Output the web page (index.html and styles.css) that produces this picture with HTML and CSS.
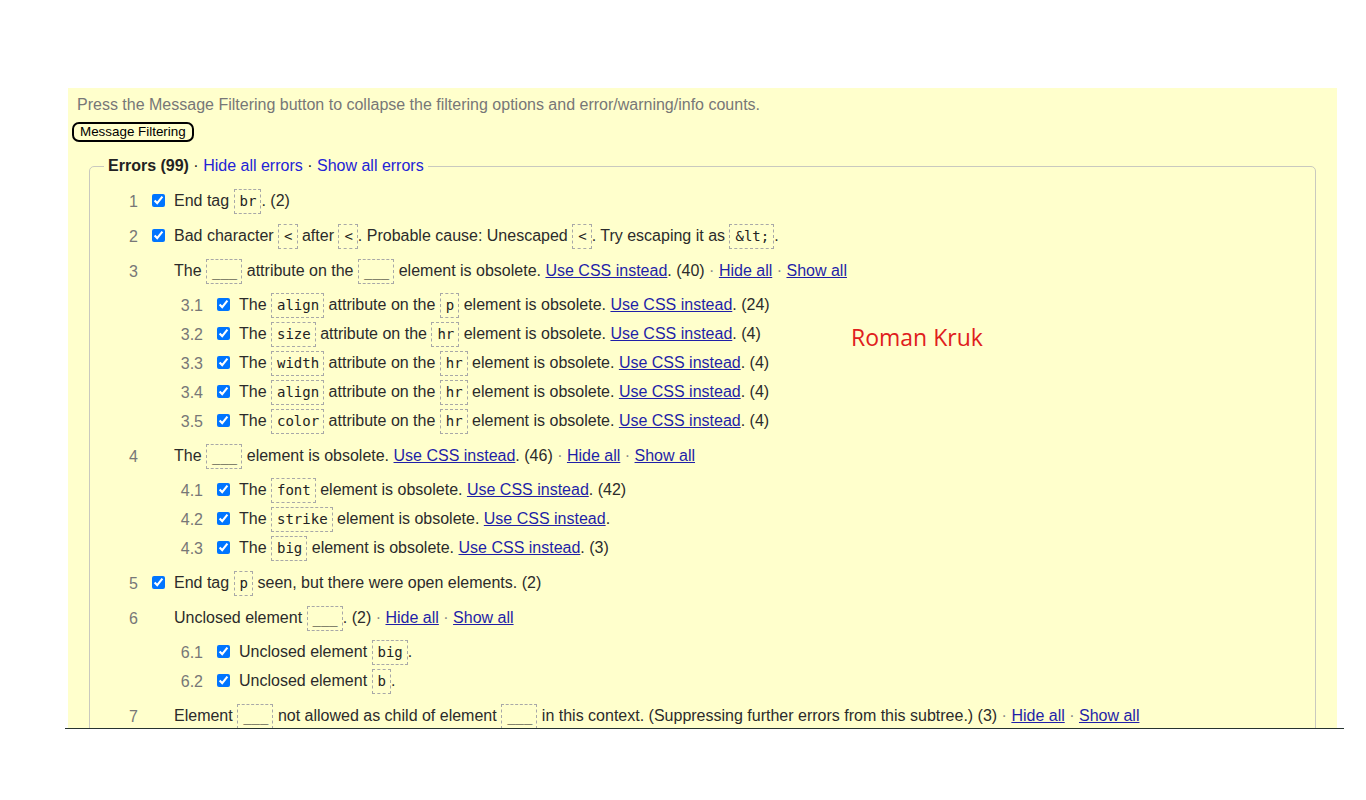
FILE: index.html
```html
<!DOCTYPE html>
<html lang="en">
<head>
<meta charset="utf-8">
<title>Message Filtering</title>
<link rel="stylesheet" href="styles.css">
</head>
<body>
<div class="page">
  <div class="panel">
    <p class="hint">Press the Message Filtering button to collapse the filtering options and error/warning/info counts.</p>
    <button class="filter-btn" type="button">Message Filtering</button>
    <fieldset class="errors">
      <legend class="legend"><b>Errors (99)</b> · <a class="lg-link" href="#">Hide all errors</a> · <a class="lg-link" href="#">Show all errors</a></legend>
      <ol class="list">
        <li class="item">
          <div class="row"><span class="num">1</span><span class="cb"><input type="checkbox" checked></span><span class="msg">End tag <code>br</code>. (2)</span></div>
        </li>
        <li class="item">
          <div class="row"><span class="num">2</span><span class="cb"><input type="checkbox" checked></span><span class="msg">Bad character <code>&lt;</code> after <code>&lt;</code>. Probable cause: Unescaped <code>&lt;</code>. Try escaping it as <code>&amp;lt;</code>.</span></div>
        </li>
        <li class="item">
          <div class="row"><span class="num">3</span><span class="cb"></span><span class="msg">The <code>___</code> attribute on the <code>___</code> element is obsolete. <a href="#">Use CSS instead</a>. (40) <span class="sep">·</span> <a href="#">Hide all</a> <span class="sep">·</span> <a href="#">Show all</a></span></div>
          <ol class="sub">
            <li class="row subrow"><span class="num">3.1</span><span class="cb"><input type="checkbox" checked></span><span class="msg">The <code>align</code> attribute on the <code>p</code> element is obsolete. <a href="#">Use CSS instead</a>. (24)</span></li>
            <li class="row subrow"><span class="num">3.2</span><span class="cb"><input type="checkbox" checked></span><span class="msg">The <code>size</code> attribute on the <code>hr</code> element is obsolete. <a href="#">Use CSS instead</a>. (4)</span></li>
            <li class="row subrow"><span class="num">3.3</span><span class="cb"><input type="checkbox" checked></span><span class="msg">The <code>width</code> attribute on the <code>hr</code> element is obsolete. <a href="#">Use CSS instead</a>. (4)</span></li>
            <li class="row subrow"><span class="num">3.4</span><span class="cb"><input type="checkbox" checked></span><span class="msg">The <code>align</code> attribute on the <code>hr</code> element is obsolete. <a href="#">Use CSS instead</a>. (4)</span></li>
            <li class="row subrow"><span class="num">3.5</span><span class="cb"><input type="checkbox" checked></span><span class="msg">The <code>color</code> attribute on the <code>hr</code> element is obsolete. <a href="#">Use CSS instead</a>. (4)</span></li>
          </ol>
        </li>
        <li class="item">
          <div class="row"><span class="num">4</span><span class="cb"></span><span class="msg">The <code>___</code> element is obsolete. <a href="#">Use CSS instead</a>. (46) <span class="sep">·</span> <a href="#">Hide all</a> <span class="sep">·</span> <a href="#">Show all</a></span></div>
          <ol class="sub">
            <li class="row subrow"><span class="num">4.1</span><span class="cb"><input type="checkbox" checked></span><span class="msg">The <code>font</code> element is obsolete. <a href="#">Use CSS instead</a>. (42)</span></li>
            <li class="row subrow"><span class="num">4.2</span><span class="cb"><input type="checkbox" checked></span><span class="msg">The <code>strike</code> element is obsolete. <a href="#">Use CSS instead</a>.</span></li>
            <li class="row subrow"><span class="num">4.3</span><span class="cb"><input type="checkbox" checked></span><span class="msg">The <code>big</code> element is obsolete. <a href="#">Use CSS instead</a>. (3)</span></li>
          </ol>
        </li>
        <li class="item">
          <div class="row"><span class="num">5</span><span class="cb"><input type="checkbox" checked></span><span class="msg">End tag <code>p</code> seen, but there were open elements. (2)</span></div>
        </li>
        <li class="item">
          <div class="row"><span class="num">6</span><span class="cb"></span><span class="msg">Unclosed element <code>___</code>. (2) <span class="sep">·</span> <a href="#">Hide all</a> <span class="sep">·</span> <a href="#">Show all</a></span></div>
          <ol class="sub">
            <li class="row subrow"><span class="num">6.1</span><span class="cb"><input type="checkbox" checked></span><span class="msg">Unclosed element <code>big</code>.</span></li>
            <li class="row subrow"><span class="num">6.2</span><span class="cb"><input type="checkbox" checked></span><span class="msg">Unclosed element <code>b</code>.</span></li>
          </ol>
        </li>
        <li class="item">
          <div class="row"><span class="num">7</span><span class="cb"></span><span class="msg">Element <code>___</code> not allowed as child of element <code>___</code> in this context. (Suppressing further errors from this subtree.) (3) <span class="sep">·</span> <a href="#">Hide all</a> <span class="sep">·</span> <a href="#">Show all</a></span></div>
        </li>
      </ol>
    </fieldset>
    <div class="signature">Roman Kruk</div>
  </div>
  <div class="rule"></div>
</div>
</body>
</html>
```

FILE: styles.css
```css
* { box-sizing: border-box; }

html, body {
  margin: 0;
  padding: 0;
  background: #ffffff;
}

body {
  font-family: "Liberation Sans", Arial, sans-serif;
  font-size: 16px;
  color: #2b2b2b;
}

.page {
  padding-top: 88px;
}

.panel {
  position: relative;
  margin-left: 68px;
  width: 1269px;
  height: 640px;
  overflow: hidden;
  background: #ffffcc;
}

.hint {
  margin: 8px 0 0 0;
  padding-left: 9px;
  color: #777777;
  line-height: 18px;
}

.filter-btn {
  display: block;
  margin: 8px 0 0 4px;
  padding: 1px 6px;
  font-family: "Liberation Sans", Arial, sans-serif;
  font-size: 13.4px;
  line-height: 14px;
  color: #000;
  background: transparent;
  border: 2px solid #000;
  border-radius: 7px;
}

.errors {
  margin: 15px 21px 0 21px;
  padding: 0 0 0 14px;
  border: 1px solid #c9c9bf;
  border-radius: 5px;
  min-height: 700px;
}

.legend {
  padding: 0 4px;
  line-height: 18px;
  color: #222;
}

.legend b { color: #222; }

.lg-link {
  color: #2323d6;
  text-decoration: none;
}

.list {
  list-style: none;
  margin: 9px 0 0 0;
  padding: 0;
}

.sub {
  list-style: none;
  margin: 0;
  padding: 2px 0 3px 65px;
}

.row {
  display: flex;
  align-items: center;
  height: 35px;
}

.subrow {
  height: 29px;
}

.num {
  width: 34px;
  flex: none;
  text-align: right;
  color: #777;
}

.cb {
  width: 22px;
  margin-left: 14px;
  flex: none;
  display: flex;
  align-items: center;
}

.cb input {
  margin: 0;
  width: 13px;
  height: 13px;
  position: relative;
  top: -1px;
}

.msg {
  white-space: nowrap;
  line-height: 25px;
}

.msg a {
  color: #1f1fa8;
  text-decoration: underline;
}

.sep {
  color: #888;
}

code {
  display: inline-block;
  vertical-align: middle;
  font-family: "DejaVu Sans Mono", monospace;
  font-size: 14px;
  line-height: 17px;
  padding: 3px 4px 3px 5px;
  border: 1px dashed #a8a8a8;
  color: #222;
  position: relative;
  top: -1px;
}

.signature {
  position: absolute;
  left: 783px;
  top: 233px;
  font-family: "Open Sans", "Noto Sans", sans-serif;
  font-size: 23px;
  color: #e0201c;
}

.rule {
  margin-left: 65px;
  width: 1279px;
  height: 1px;
  background: #26332f;
}
```
